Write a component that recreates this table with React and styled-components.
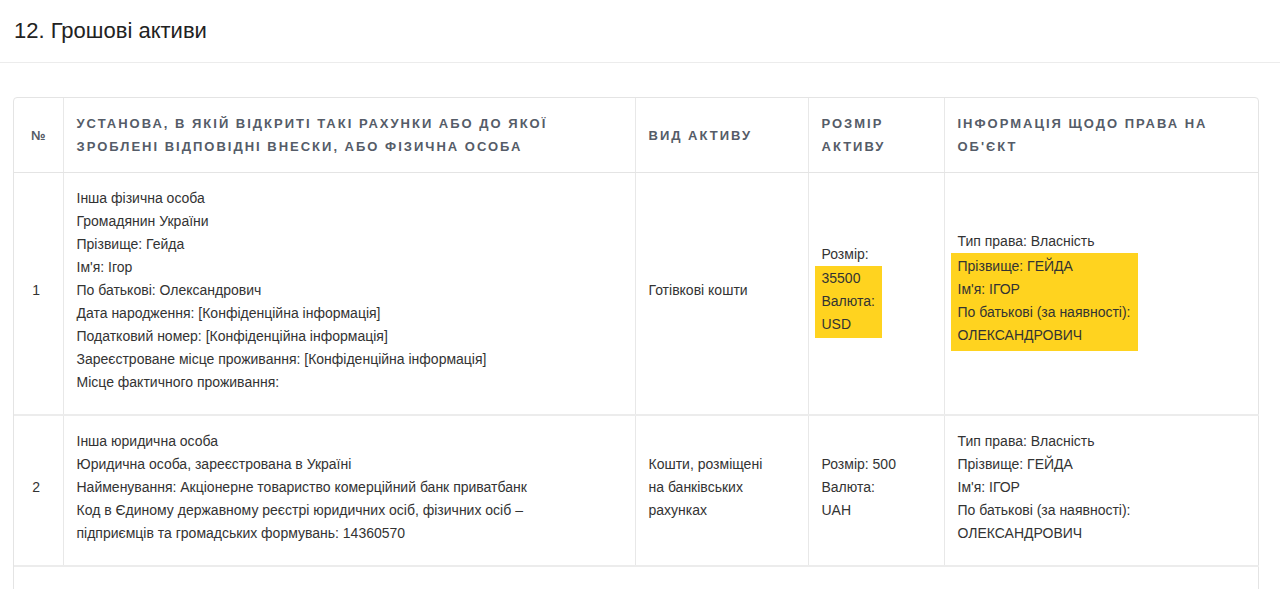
import React from 'react';
import styled, { createGlobalStyle } from 'styled-components';

const GlobalStyle = createGlobalStyle`
    html, body {
        margin: 0;
        padding: 0;
        background: #fff;
    }
    body {
        font-family: "Liberation Sans", Arial, sans-serif;
        color: #333;
    }
`

const SectionHeader = styled.div`
    padding: 17px 14px;
    border-bottom: 1px solid #ececec;
`

const Title = styled.h2`
    margin: 0;
    font-size: 22px;
    line-height: 28px;
    font-weight: normal;
    color: #222;
`

const TableBox = styled.div`
    margin: 34px 21px 0 13px;
    border: 1px solid #e4e4e4;
    border-radius: 4px;
    padding-bottom: 40px;
`

const Table = styled.table`
    width: 100%;
    table-layout: fixed;
    border-collapse: collapse;
`

const HeadCell = styled.th`
    padding: ${p => (p.center ? '14px 6px' : '14px 20px 14px 13px')};
    text-align: ${p => (p.center ? 'center' : 'left')};
    vertical-align: middle;
    font-size: 13px;
    line-height: 23px;
    font-weight: bold;
    letter-spacing: ${p => (p.center ? '0' : '2px')};
    text-transform: uppercase;
    color: #555c68;
    border-left: ${p => (p.first ? 'none' : '1px solid #e8e8e8')};
    border-bottom: 1px solid #e4e4e4;
`

const Cell = styled.td`
    padding: 14px 30px 20px 13px;
    text-align: left;
    vertical-align: middle;
    font-size: 14px;
    line-height: 23px;
    color: #333;
    border-left: 1px solid #e8e8e8;
    border-bottom: 2px solid #ececec;
`

const NumCell = styled(Cell)`
    padding-left: 6px;
    padding-right: 10px;
    text-align: center;
    border-left: none;
`

const Line = styled.div``

const Mark = styled.div`
    width: fit-content;
    margin-left: -7px;
    padding: ${p => p.pad || '1px 7px 2px'};
    background: #ffd31f;
`

const columns = [
    { w: 49, label: '№', center: true },
    { w: 572, label: 'Установа, в якій відкриті такі рахунки або до якої зроблені відповідні внески, або фізична особа' },
    { w: 173, label: 'Вид активу' },
    { w: 136, label: 'Розмір активу' },
    { w: 315, label: 'Інформація щодо права на об\'єкт' },
]

const personLines = [
    'Інша фізична особа',
    'Громадянин України',
    'Прізвище: Гейда',
    'Ім\'я: Ігор',
    'По батькові: Олександрович',
    'Дата народження: [Конфіденційна інформація]',
    'Податковий номер: [Конфіденційна інформація]',
    'Зареєстроване місце проживання: [Конфіденційна інформація]',
    'Місце фактичного проживання:',
]

const companyLines = [
    'Інша юридична особа',
    'Юридична особа, зареєстрована в Україні',
    'Найменування: Акціонерне товариство комерційний банк приватбанк',
    'Код в Єдиному державному реєстрі юридичних осіб, фізичних осіб –',
    'підприємців та громадських формувань: 14360570',
]

const ownerLines = [
    'Прізвище: ГЕЙДА',
    'Ім\'я: ІГОР',
    'По батькові (за наявності):',
    'ОЛЕКСАНДРОВИЧ',
]

function Lines({ items }) {
    return items.map(t => <Line key={t}>{t}</Line>)
}

export default function App() {
    return (
        <>
            <GlobalStyle />
            <SectionHeader>
                <Title>12. Грошові активи</Title>
            </SectionHeader>
            <TableBox>
                <Table>
                    <colgroup>
                        {columns.map(c => <col key={c.label} style={{ width: c.w }} />)}
                    </colgroup>
                    <thead>
                        <tr>
                            {columns.map((c, i) => (
                                <HeadCell key={c.label} first={i === 0} center={c.center}>{c.label}</HeadCell>
                            ))}
                        </tr>
                    </thead>
                    <tbody>
                        <tr>
                            <NumCell>1</NumCell>
                            <Cell><Lines items={personLines} /></Cell>
                            <Cell>Готівкові кошти</Cell>
                            <Cell>
                                <Line>Розмір:</Line>
                                <Mark>
                                    <Lines items={['35500', 'Валюта:', 'USD']} />
                                </Mark>
                            </Cell>
                            <Cell>
                                <Line>Тип права: Власність</Line>
                                <Mark pad="2px 7px 4px">
                                    <Lines items={ownerLines} />
                                </Mark>
                            </Cell>
                        </tr>
                        <tr>
                            <NumCell>2</NumCell>
                            <Cell><Lines items={companyLines} /></Cell>
                            <Cell>Кошти, розміщені на банківських рахунках</Cell>
                            <Cell>
                                <Line>Розмір: 500</Line>
                                <Line>Валюта:</Line>
                                <Line>UAH</Line>
                            </Cell>
                            <Cell>
                                <Line>Тип права: Власність</Line>
                                <Lines items={ownerLines} />
                            </Cell>
                        </tr>
                    </tbody>
                </Table>
            </TableBox>
        </>
    )
}
